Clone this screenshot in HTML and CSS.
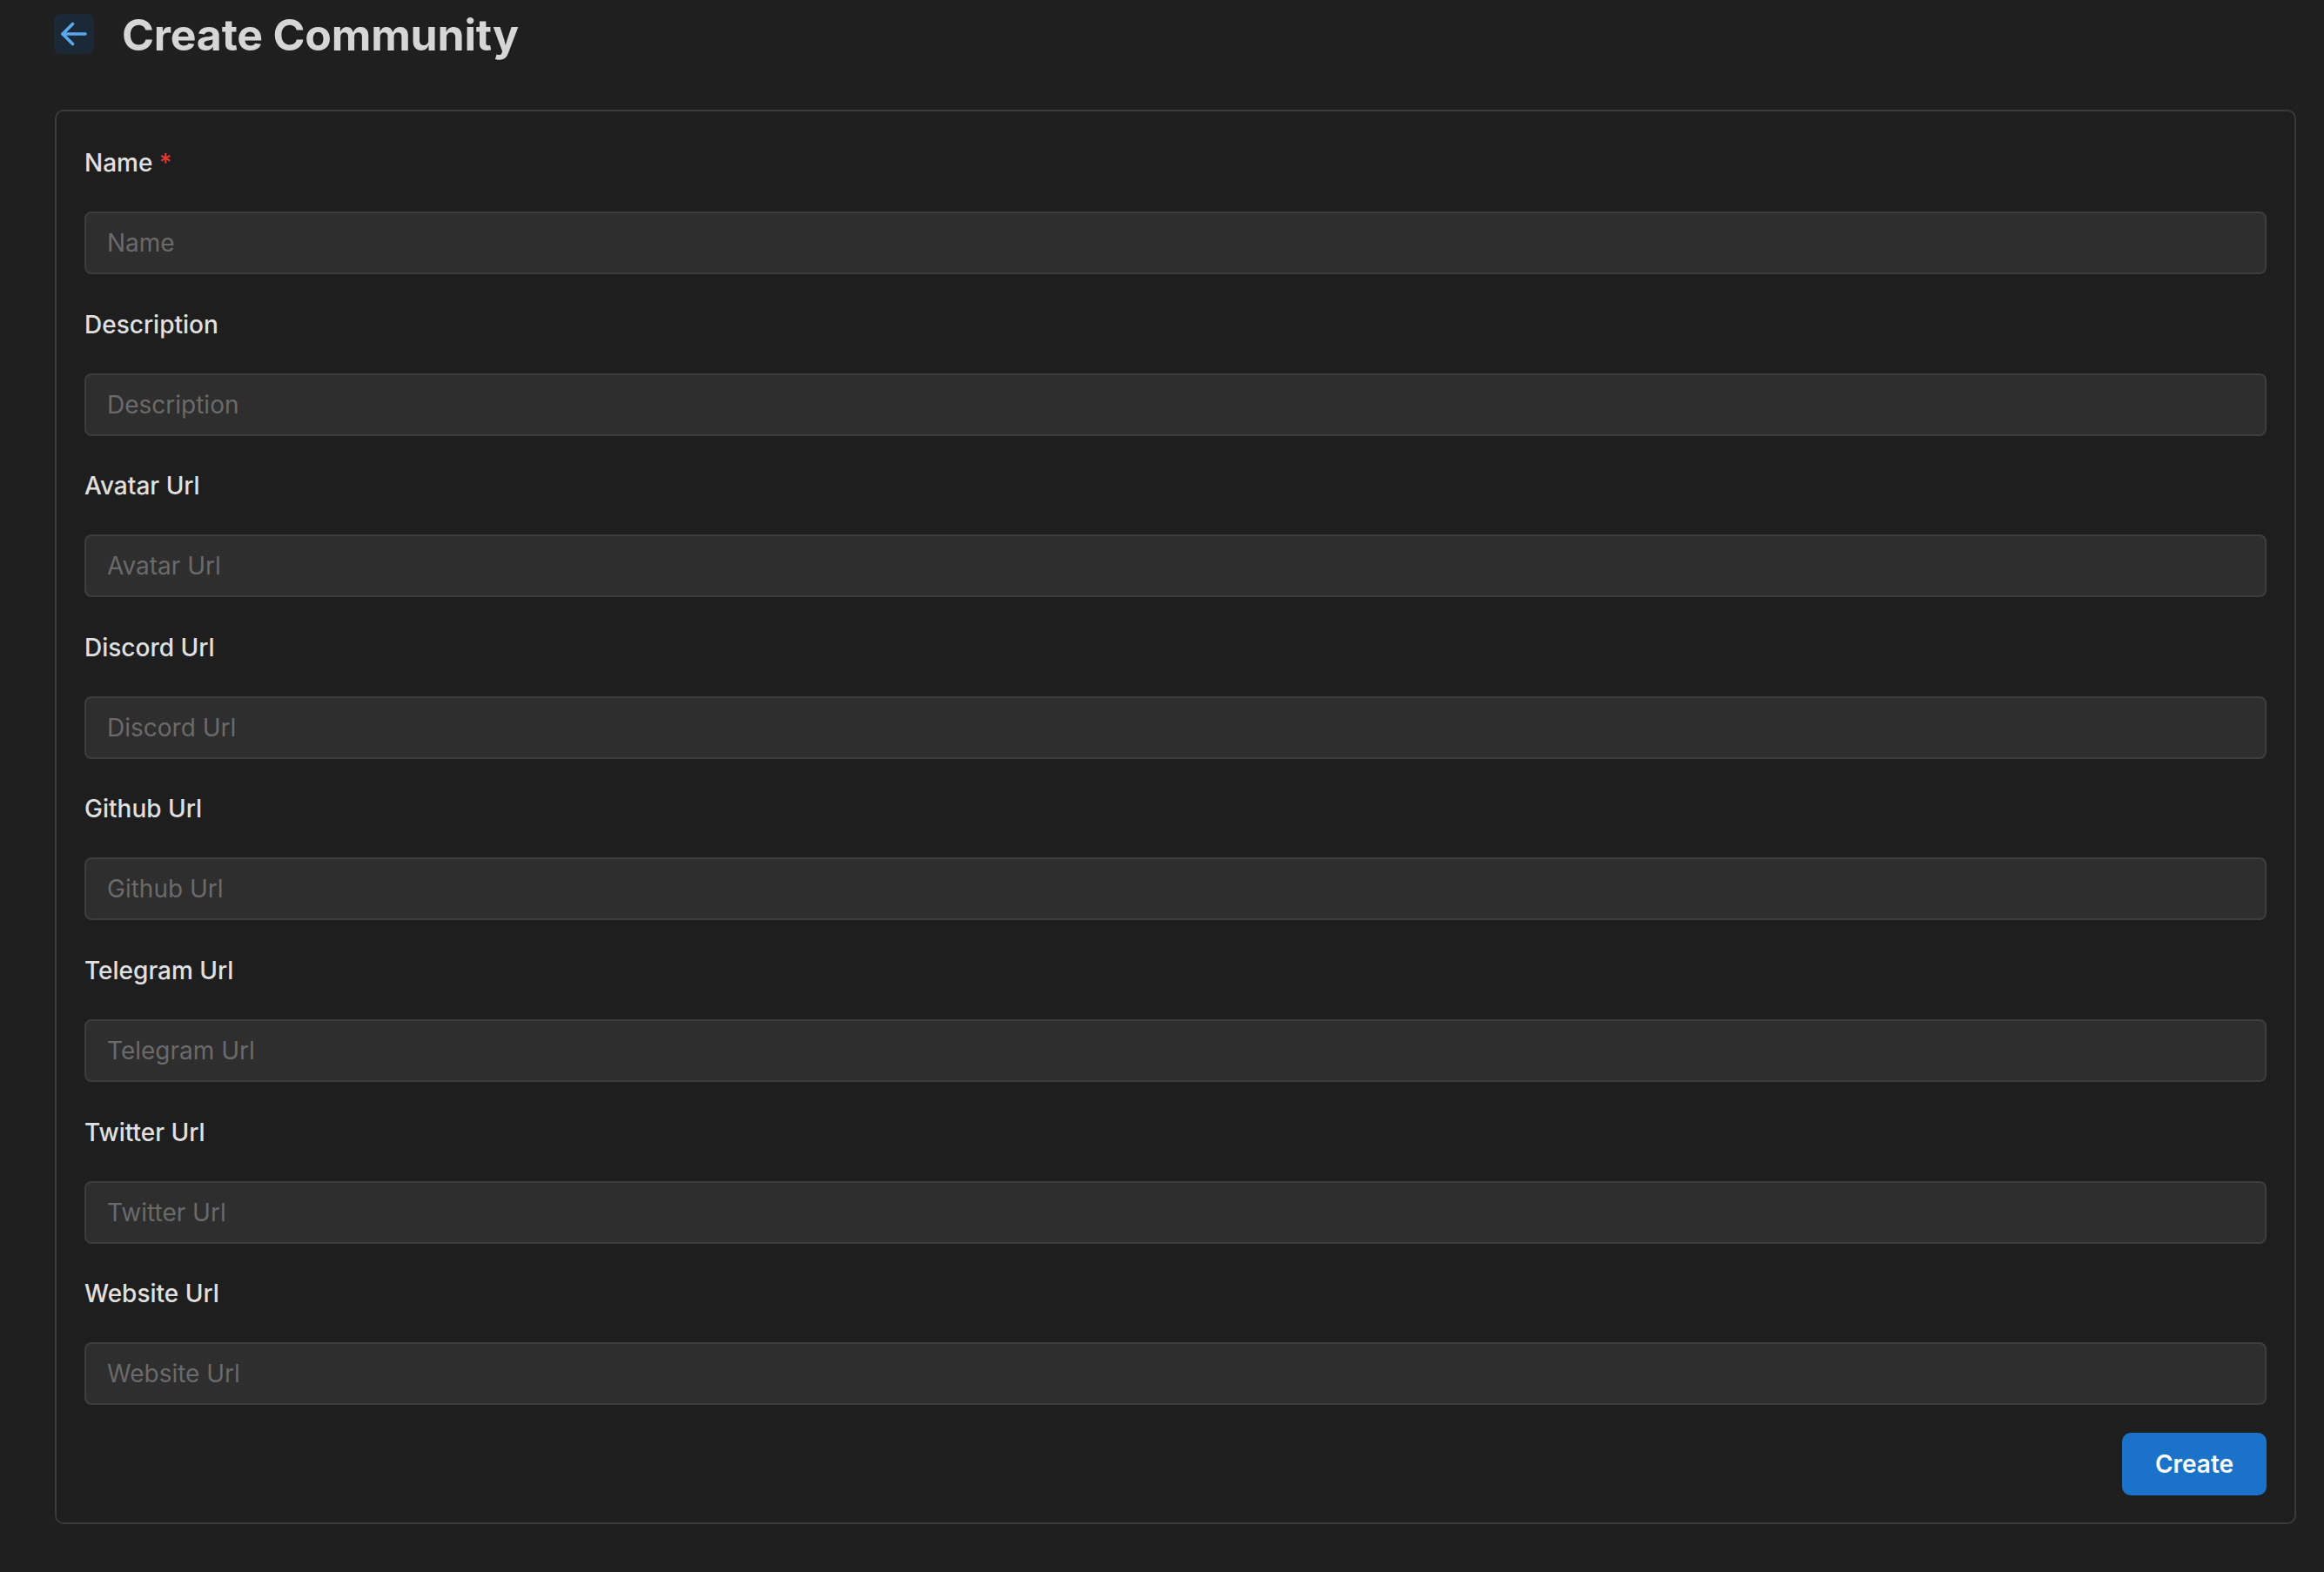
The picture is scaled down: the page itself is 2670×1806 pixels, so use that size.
FILE: index.html
```html
<!DOCTYPE html>
<html lang="en">
<head>
<meta charset="utf-8">
<title>Create Community</title>
<link rel="stylesheet" href="styles.css">
</head>
<body>
<div class="page">
  <header class="header">
    <button class="back-btn" type="button" aria-label="Back">
      <svg width="32" height="28" viewBox="0 0 32 28" fill="none" stroke="currentColor" stroke-width="3.6" stroke-linecap="round" stroke-linejoin="round">
        <path d="M29 14H3"/>
        <path d="M14.5 2.5L3 14l11.5 11.5"/>
      </svg>
    </button>
    <h1 class="title">Create Community</h1>
  </header>

  <form class="card">
    <div class="field">
      <label class="label">Name <span class="req">*</span></label>
      <input class="input" type="text" placeholder="Name">
    </div>
    <div class="field">
      <label class="label">Description</label>
      <input class="input" type="text" placeholder="Description">
    </div>
    <div class="field">
      <label class="label">Avatar Url</label>
      <input class="input" type="text" placeholder="Avatar Url">
    </div>
    <div class="field">
      <label class="label">Discord Url</label>
      <input class="input" type="text" placeholder="Discord Url">
    </div>
    <div class="field">
      <label class="label">Github Url</label>
      <input class="input" type="text" placeholder="Github Url">
    </div>
    <div class="field">
      <label class="label">Telegram Url</label>
      <input class="input" type="text" placeholder="Telegram Url">
    </div>
    <div class="field">
      <label class="label">Twitter Url</label>
      <input class="input" type="text" placeholder="Twitter Url">
    </div>
    <div class="field">
      <label class="label">Website Url</label>
      <input class="input" type="text" placeholder="Website Url">
    </div>
    <div class="actions">
      <button class="create-btn" type="button">Create</button>
    </div>
  </form>
</div>
</body>
</html>
```

FILE: styles.css
```css
* { box-sizing: border-box; }

html, body {
  margin: 0;
  padding: 0;
  background: #1f1f1f;
  font-family: Inter, "Noto Sans", "DejaVu Sans", sans-serif;
}

.page {
  padding: 16px 32px 56px 63px;
}

.header {
  display: flex;
  align-items: center;
  gap: 32px;
  height: 46px;
}

.back-btn {
  width: 46px;
  height: 46px;
  margin-left: -1px;
  border: none;
  border-radius: 8px;
  background: #1b2936;
  color: #5ba8ee;
  display: flex;
  align-items: center;
  justify-content: center;
  padding: 0;
}

.title {
  margin: 0;
  font-size: 50px;
  font-weight: 700;
  color: #d6d6d6;
  line-height: 46px;
  letter-spacing: -0.2px;
  position: relative;
  top: 1px;
}

.card {
  margin-top: 64px;
  border: 2px solid #3a3a3a;
  border-radius: 10px;
  background: #1e1e1e;
  padding: 39px 32px 31px 32px;
  display: flex;
  flex-direction: column;
  gap: 37.6px;
}

.field {
  display: flex;
  flex-direction: column;
  gap: 36px;
}

.label {
  font-size: 28px;
  line-height: 40px;
  font-weight: 500;
  color: #e0e0e0;
}

.req {
  color: #e53935;
}

.input {
  width: 100%;
  height: 72px;
  border: 2px solid #3d3d3d;
  border-radius: 8px;
  background: #2e2e2e;
  padding: 0 24px;
  font-family: inherit;
  font-size: 28px;
  color: #e2e2e2;
  outline: none;
}

.input::placeholder {
  color: #6a6a6a;
}

.actions {
  display: flex;
  justify-content: flex-end;
  margin-top: -5.6px;
}

.create-btn {
  width: 166px;
  height: 72px;
  border: none;
  border-radius: 10px;
  background: #1a73c9;
  color: #ffffff;
  font-family: inherit;
  font-size: 28px;
  font-weight: 600;
  padding: 0;
}
```
